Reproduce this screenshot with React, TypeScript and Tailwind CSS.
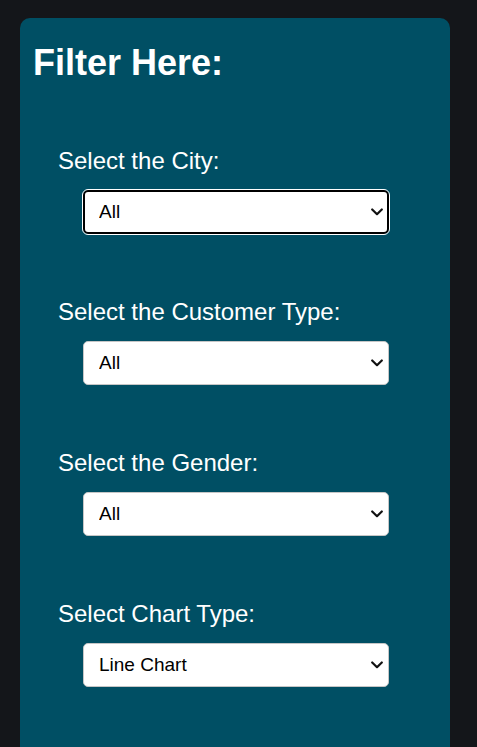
import { FC, useState } from 'react'

type Filter = {
	label: string
	options: string[]
}

const filters: Filter[] = [
	{ label: 'Select the City:', options: ['All', 'Yangon', 'Naypyitaw', 'Mandalay'] },
	{ label: 'Select the Customer Type:', options: ['All', 'Member', 'Normal'] },
	{ label: 'Select the Gender:', options: ['All', 'Male', 'Female'] },
	{ label: 'Select Chart Type:', options: ['Line Chart', 'Bar Chart', 'Area Chart'] },
]

const Chevron: FC = () => (
	<svg
		className="pointer-events-none absolute right-[6px] top-1/2 -translate-y-1/2"
		width="12"
		height="8"
		viewBox="0 0 12 8"
		fill="none"
	>
		<path d="M1.2 1.5 6 6.2l4.8-4.7" stroke="#111" strokeWidth="2.2" strokeLinecap="round" strokeLinejoin="round" />
	</svg>
)

const App: FC = () => {
	const [values, setValues] = useState<string[]>(filters.map((f) => f.options[0]))

	return (
		<div className="min-h-screen bg-[#14161a] px-[20px] pt-[18px] font-['Liberation_Sans',Arial,sans-serif]">
			<div className="w-[430px] rounded-[10px] bg-[#004f64] px-[13px] pt-[25px] pb-[110px] text-white">
				<h1 className="text-[36px] font-bold leading-[40px]">Filter Here:</h1>

				{filters.map((f, i) => (
					<div key={f.label} className="mt-[64px] pl-[25px]">
						<label className="block text-[24px] leading-[28px]">{f.label}</label>
						<div className="relative mt-[15px] ml-[25px] w-[306px]">
							<select
								value={values[i]}
								onChange={(e) =>
									setValues(values.map((v, j) => (j === i ? e.target.value : v)))
								}
								className={`block h-[44px] w-full appearance-none rounded-[5px] bg-white text-[19px] text-black ${
									i === 0
										? 'border-2 border-black pl-[14px] outline outline-1 outline-white'
										: 'border border-[#c6c6c6] pl-[15px]'
								}`}
							>
								{f.options.map((o) => (
									<option key={o}>{o}</option>
								))}
							</select>
							<Chevron />
						</div>
					</div>
				))}
			</div>
		</div>
	)
}

export default App
